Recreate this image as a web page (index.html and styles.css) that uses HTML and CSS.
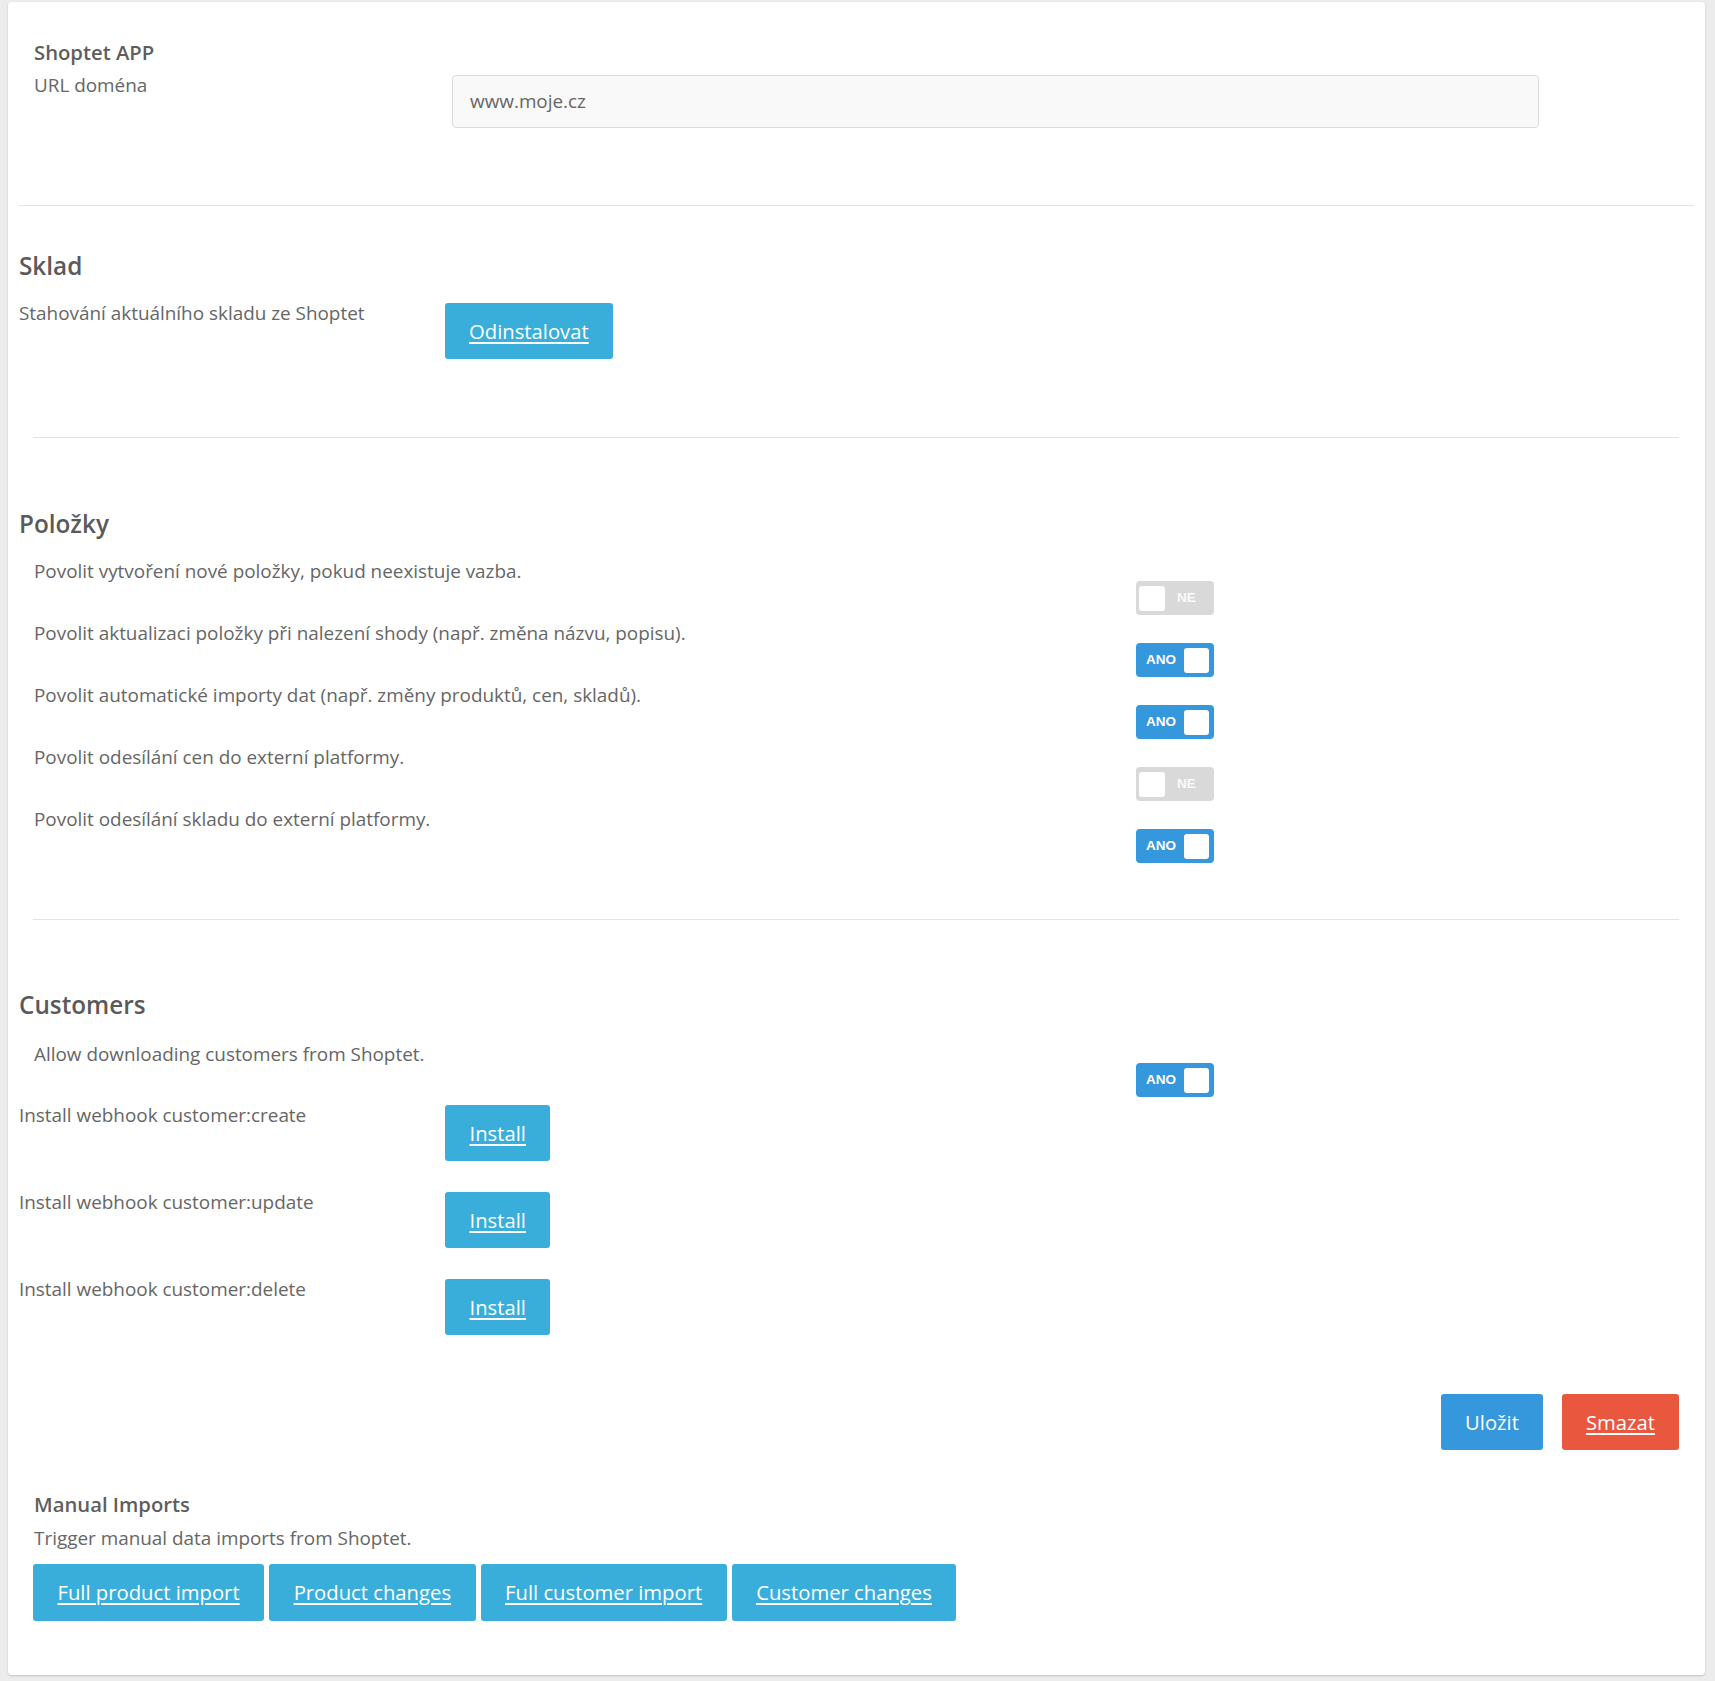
FILE: index.html
```html
<!DOCTYPE html>
<html lang="cs">
<head>
<meta charset="utf-8">
<title>Shoptet APP</title>
<link rel="stylesheet" href="styles.css">
</head>
<body>
<div class="card">
  <section class="app">
    <div class="app-title">Shoptet APP</div>
    <div class="app-row">
      <label class="app-label">URL doména</label>
      <input class="input" type="text" value="www.moje.cz">
    </div>
  </section>
  <hr class="rule">

  <section class="sklad">
    <h3 class="heading">Sklad</h3>
    <div class="btn-row">
      <span class="label">Stahování aktuálního skladu ze Shoptet</span>
      <div><a class="btn btn-aqua" href="#">Odinstalovat</a></div>
    </div>
  </section>
  <hr class="rule rule-inset">

  <section class="polozky">
    <h3 class="heading">Položky</h3>
    <div class="toggle-list">
      <div class="toggle-row">
        <span class="label">Povolit vytvoření nové položky, pokud neexistuje vazba.</span>
        <span class="toggle off"><span class="knob"></span><span class="tlabel">NE</span></span>
      </div>
      <div class="toggle-row">
        <span class="label">Povolit aktualizaci položky při nalezení shody (např. změna názvu, popisu).</span>
        <span class="toggle on"><span class="tlabel">ANO</span><span class="knob"></span></span>
      </div>
      <div class="toggle-row">
        <span class="label">Povolit automatické importy dat (např. změny produktů, cen, skladů).</span>
        <span class="toggle on"><span class="tlabel">ANO</span><span class="knob"></span></span>
      </div>
      <div class="toggle-row">
        <span class="label">Povolit odesílání cen do externí platformy.</span>
        <span class="toggle off"><span class="knob"></span><span class="tlabel">NE</span></span>
      </div>
      <div class="toggle-row">
        <span class="label">Povolit odesílání skladu do externí platformy.</span>
        <span class="toggle on"><span class="tlabel">ANO</span><span class="knob"></span></span>
      </div>
    </div>
  </section>
  <hr class="rule rule-inset rule-3">

  <section class="customers">
    <h3 class="heading">Customers</h3>
    <div class="toggle-row toggle-row-c">
      <span class="label">Allow downloading customers from Shoptet.</span>
      <span class="toggle on"><span class="tlabel">ANO</span><span class="knob"></span></span>
    </div>
    <div class="btn-row hook-row">
      <span class="label">Install webhook customer:create</span>
      <div><a class="btn btn-aqua" href="#">Install</a></div>
    </div>
    <div class="btn-row hook-row">
      <span class="label">Install webhook customer:update</span>
      <div><a class="btn btn-aqua" href="#">Install</a></div>
    </div>
    <div class="btn-row hook-row">
      <span class="label">Install webhook customer:delete</span>
      <div><a class="btn btn-aqua" href="#">Install</a></div>
    </div>
  </section>

  <div class="actions">
    <button class="btn btn-blue" type="button">Uložit</button>
    <a class="btn btn-red" href="#">Smazat</a>
  </div>

  <section class="manual">
    <div class="app-title">Manual Imports</div>
    <div class="manual-desc">Trigger manual data imports from Shoptet.</div>
    <div class="manual-buttons">
      <a class="btn btn-aqua btn-tall" href="#">Full product import</a>
      <a class="btn btn-aqua btn-tall" href="#">Product changes</a>
      <a class="btn btn-aqua btn-tall" href="#">Full customer import</a>
      <a class="btn btn-aqua btn-tall" href="#">Customer changes</a>
    </div>
  </section>
</div>
</body>
</html>
```
FILE: styles.css
```css
* { box-sizing: border-box; }

html, body { margin: 0; }

body {
  background: #ececec;
  padding: 2px 10px 6px 8px;
  font-family: "Open Sans", "Liberation Sans", sans-serif;
  font-size: 18.9px;
  line-height: 27px;
  color: #666;
}

.card {
  background: #fff;
  border-radius: 4px;
  box-shadow: 0 1px 2px rgba(0, 0, 0, 0.18);
  padding: 0 11px 54px 11px;
}

/* Shoptet APP */
.app {
  padding: 37px 0 0 15px;
  height: 203px;
}
.app-title {
  font-weight: 600;
  color: #5e5e5e;
  font-size: 20.25px;
  line-height: 27px;
}
.app-row {
  display: grid;
  grid-template-columns: 418px 1087px;
  align-items: start;
  margin-top: 6px;
}
.app-label { color: #666; }
.input {
  margin-top: 3px;
  height: 53px;
  width: 1087px;
  padding: 0 17px 2px 17px;
  border: 1px solid #dcdcdc;
  border-radius: 4px;
  background: #f9f9f9;
  font-family: "Open Sans", "Liberation Sans", sans-serif;
  font-size: 18.9px;
  color: #666;
  outline: none;
}

.rule {
  border: 0;
  border-top: 1px solid #e3e3e3;
  margin: 0;
  height: 0;
}
.rule-inset { margin: 0 15px 0 14px; }

.heading {
  margin: 0;
  font-size: 24.3px;
  line-height: 27px;
  font-weight: 600;
  color: #5a5a5a;
}

.label { color: #666; }

/* Sklad */
.sklad {
  padding-top: 46px;
  height: 231px;
}
.btn-row {
  display: grid;
  grid-template-columns: 426px 1fr;
  align-items: start;
  margin-top: 21px;
}
.btn-row .btn { margin-top: 3px; }

/* Buttons */
.btn {
  display: inline-block;
  font-family: "Open Sans", "Liberation Sans", sans-serif;
  font-size: 20.25px;
  line-height: 28px;
  padding: 14px 24px;
  border: 0;
  border-radius: 3px;
  color: #fff;
  text-decoration: underline;
  text-underline-offset: 3px;
  text-decoration-thickness: 1.5px;
  cursor: pointer;
}
.btn-aqua { background: #3aaedb; }
.btn-blue { background: #3598dc; text-decoration: none; }
.btn-red { background: #e9573f; }
.btn-tall { line-height: 29px; padding: 14px 24.5px; }
.hook-row .btn { padding: 14px 24.5px; }

/* Položky */
.polozky {
  padding-top: 72px;
  height: 481px;
}
.toggle-list { margin-top: 21px; }
.toggle-row {
  display: grid;
  grid-template-columns: 1102px 78px;
  height: 62px;
  padding-left: 15px;
}
.toggle-row .toggle { margin-top: 23px; }

.toggle {
  width: 78px;
  height: 34px;
  border-radius: 4px;
  display: flex;
  align-items: center;
  font-family: "Liberation Sans", Arial, sans-serif;
  font-weight: bold;
  font-size: 13.5px;
  line-height: 16px;
  color: #fff;
}
.toggle .knob {
  width: 25px;
  height: 25px;
  background: #fff;
  border-radius: 3px;
}
.toggle.on {
  background: #3598dc;
  justify-content: space-between;
  padding: 0 5px 0 10px;
}
.toggle.off {
  background: #d9d9d9;
  padding-left: 3px;
  gap: 12px;
}
.toggle.off .knob { width: 26px; }
.toggle.off .tlabel { color: #fafafa; }

/* Customers */
.customers {
  padding-top: 71px;
}
.toggle-row-c {
  margin-top: 23px;
  height: 61px;
}
.toggle-row-c .toggle { margin-top: 22px; }
.customers .hook-row {
  margin-top: 0;
  height: 87px;
}

.actions {
  display: flex;
  justify-content: flex-end;
  gap: 19px;
  padding-right: 15px;
  margin-top: 31px;
}

/* Manual imports */
.manual {
  padding-left: 15px;
  margin-top: 41px;
}
.manual-desc {
  margin-top: 7px;
  color: #666;
}
.manual-buttons {
  display: flex;
  gap: 5px;
  margin-top: 12px;
  margin-left: -1px;
}
```
